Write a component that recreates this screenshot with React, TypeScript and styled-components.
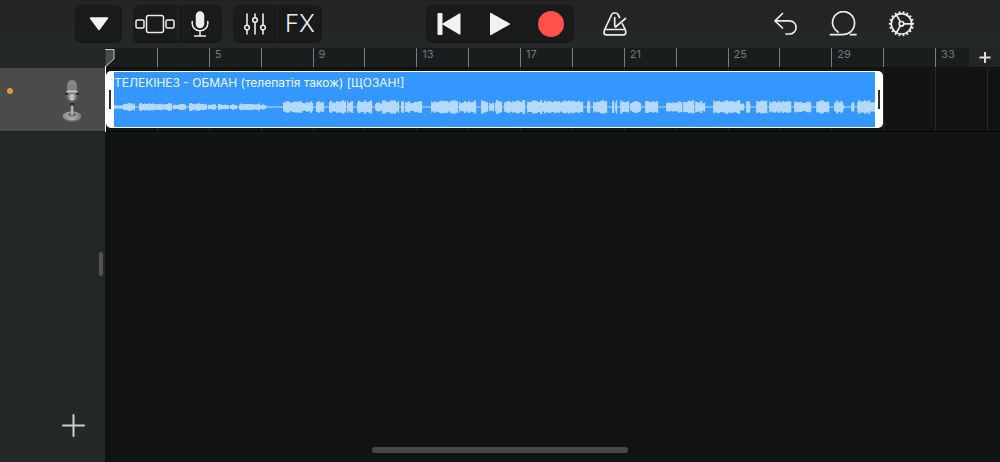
import React from "react";
import styled, { createGlobalStyle } from "styled-components";

const GlobalStyle = createGlobalStyle`
  *, *::before, *::after { box-sizing: border-box; }
  body {
    margin: 0;
    background: #121413;
    color: #ececec;
    font-family: Inter, "Liberation Sans", sans-serif;
  }
  button { font: inherit; color: inherit; border: 0; padding: 0; background: none; cursor: pointer; }
`;

const COLUMNS = "repeat(17, minmax(0, 1fr))";

const Page = styled.div`
  position: relative;
  display: flex;
  flex-direction: column;
  min-height: 100vh;
`;

const Toolbar = styled.header`
  display: grid;
  grid-template-columns: 1fr auto 1fr;
  height: 48px;
  padding: 5px 75px;
  background: linear-gradient(#232423, #252829);
`;

const ToolCluster = styled.div`
  display: flex;
  gap: 11px;
`;

const ActionCluster = styled.div`
  display: flex;
  gap: 10px;
  padding-left: 16px;
`;

const ButtonGroup = styled.div`
  display: flex;
  overflow: hidden;
  border-radius: 6px;
  background: #191a1a;
`;

const ToolButton = styled.button<{ $width?: number }>`
  display: flex;
  align-items: center;
  justify-content: center;
  width: ${(p) => p.$width ?? 44}px;
  height: 38px;

  ${ButtonGroup} > & + & {
    box-sizing: content-box;
    border-left: 1px solid #242626;
  }
`;

const FxLabel = styled.span`
  font-size: 24px;
  font-weight: 300;
  line-height: 38px;
`;

const PlainButton = styled.button<{ $push?: boolean }>`
  display: flex;
  align-items: center;
  justify-content: center;
  width: 48px;
  height: 38px;
  ${(p) => p.$push && "margin-left: auto;"}
`;

const Workspace = styled.main`
  display: flex;
  flex: 1;
`;

const Sidebar = styled.aside`
  display: flex;
  flex-direction: column;
  width: 105px;
  background: #252829;
`;

const TrackHeader = styled.div`
  display: flex;
  align-items: center;
  justify-content: space-between;
  height: 64px;
  margin-top: 20px;
  padding: 0 22px 0 7px;
  border-bottom: 1px solid #1f2122;
  background: #4b4b4c;
`;

const StatusDot = styled.span`
  width: 6px;
  height: 6px;
  margin-bottom: 18px;
  border-radius: 50%;
  background: #dc9c3f;
`;

const ResizeGrip = styled.div`
  align-self: flex-end;
  width: 4px;
  height: 24px;
  margin: 120px 2px auto 0;
  border-radius: 2px;
  background: #525455;
`;

const AddTrack = styled.button`
  display: flex;
  align-self: flex-end;
  margin: 0 20px 25px 0;
`;

const Timeline = styled.section`
  position: relative;
  flex: 1;
  min-width: 0;
`;

const Ruler = styled.div`
  display: grid;
  grid-template-columns: ${COLUMNS};
  height: 20px;
  padding-right: 13px;
  border-bottom: 1px solid #111212;
  background: #1a1d1e;
`;

const RulerMark = styled.span<{ $first: boolean }>`
  padding-left: 5px;
  border-left: 1px solid ${(p) => (p.$first ? "transparent" : "#7b7e7e")};
  color: #77797a;
  font-size: 11px;
  line-height: 13px;
`;

const AddSection = styled.button`
  position: absolute;
  top: 0;
  right: 0;
  display: flex;
  align-items: center;
  justify-content: center;
  width: 31px;
  height: 19px;
  background: #232525;
`;

const Lane = styled.div`
  display: grid;
  grid-template-columns: ${COLUMNS};
  height: 64px;
  padding-right: 13px;
  border-bottom: 1px solid #050505;
`;

const LaneCell = styled.span<{ $column: number }>`
  grid-row: 1;
  grid-column: ${(p) => p.$column};
  border-right: 1px solid #292b2a;
  transform: translateX(1px);
`;

const Region = styled.div`
  z-index: 1;
  display: flex;
  grid-row: 1;
  grid-column: 1 / span 15;
  height: 57px;
  margin: 3px 0 0 1px;
  border-radius: 5px;
  background: #fff;
`;

const RegionHandle = styled.button`
  display: flex;
  align-items: center;
  justify-content: center;
  width: 8px;
  cursor: ew-resize;

  &::before {
    content: "";
    width: 2px;
    height: 19px;
    background: #2c2e30;
  }
`;

const RegionBody = styled.div`
  display: flex;
  flex: 1;
  flex-direction: column;
  min-width: 0;
  margin: 1px 0;
  background: #3397ff;
`;

const RegionName = styled.span`
  overflow: hidden;
  height: 24px;
  color: #f1f8ff;
  font-size: 12px;
  line-height: 22px;
  white-space: nowrap;
`;

const Wave = styled.svg`
  display: block;
  width: 100%;
  height: 22px;
`;

const Playhead = styled.svg`
  position: absolute;
  z-index: 2;
  top: 0;
  left: 0;
`;

const HomeBar = styled.div`
  position: absolute;
  bottom: 9px;
  left: 50%;
  width: 256px;
  height: 6px;
  border-radius: 3px;
  background: #474948;
  transform: translateX(-50%);
`;

// Start, end and peak of each burst of sound, measured along a 761-unit clip.
const bursts: number[][] = [
  [0, 8, 2], [9, 20, 4], [25, 44, 4], [45, 57, 4], [59, 71, 3], [75, 92, 4], [94, 101, 3],
  [104, 114, 3], [116, 122, 3], [125, 145, 4], [145, 151, 3], [169, 198, 6], [202, 209, 6],
  [215, 231, 7], [233, 238, 6], [243, 257, 7], [261, 267, 5], [268, 284, 7], [287, 289, 6],
  [291, 307, 6], [317, 343, 7], [345, 359, 6], [360, 361, 7], [367, 373, 7], [375, 379, 5],
  [381, 387, 7], [390, 410, 7], [413, 426, 7], [427, 446, 7], [447, 468, 7], [473, 475, 7],
  [479, 492, 7], [498, 499, 7], [501, 502, 7], [506, 514, 7], [516, 526, 6], [531, 543, 7],
  [552, 567, 6], [569, 579, 7], [581, 590, 6], [599, 625, 7], [626, 629, 5], [632, 635, 6],
  [642, 652, 7], [655, 676, 6], [680, 696, 6], [702, 714, 7], [720, 728, 7], [729, 729, 3],
  [737, 739, 5], [743, 761, 7],
];

const noise = (n: number) => {
  const v = Math.sin(n * 12.9898) * 43758.5453;
  return v - Math.floor(v);
};

const wavePath = bursts
  .map(([start, end, peak]) => {
    let d = "";
    for (let x = start; x <= end; x += 1) {
      const h = peak * (0.62 + 0.38 * noise(Math.floor(x / 2) + 3));
      d += `M${x + 0.5} ${(11 - h).toFixed(1)}V${(11 + h).toFixed(1)}`;
    }
    return d;
  })
  .join("");

const gearTeeth = Array.from({ length: 18 }, (_, i) => i * 20);

const labels = Array.from({ length: 17 }, (_, i) => (i > 0 && i % 2 === 0 ? i * 2 + 1 : null));

const stroke = {
  fill: "none",
  stroke: "#ececec",
  strokeWidth: 1.7,
  strokeLinecap: "round" as const,
  strokeLinejoin: "round" as const,
};

const MenuIcon = () => (
  <svg width="20" height="14" viewBox="0 0 20 14">
    <path d="M1.500 1H18.500L10 12.500Z" fill="#f2f2f2" stroke="#f2f2f2" strokeWidth="1.500" strokeLinejoin="round" />
  </svg>
);

const BrowserIcon = () => (
  <svg width="40" height="20" viewBox="0 0 40 20" {...stroke} strokeWidth="1.500">
    <rect x="11.500" y="1.500" width="17" height="17" rx="2" />
    <rect x="1" y="6" width="8" height="8" rx="1.500" />
    <rect x="31" y="6" width="8" height="8" rx="1.500" />
  </svg>
);

const VoiceIcon = () => (
  <svg width="18" height="26" viewBox="0 0 18 26" {...stroke} strokeWidth="1.500">
    <rect x="5.500" y="1" width="7" height="15.500" rx="3.500" fill="#ececec" />
    <path d="M1.200 10.500V12.500A7.800 7.200 0 0 0 16.800 12.500V10.500M9 20V24.500M3.500 25H14.500" />
  </svg>
);

const MixerIcon = () => (
  <svg width="22" height="22" viewBox="0 0 22 22" {...stroke} strokeWidth="1.600">
    <path d="M3 1V12M3 17V21M11 1V4.500M11 9.500V21M19 1V12M19 17V21" />
    <circle cx="3" cy="14.500" r="2.300" />
    <circle cx="11" cy="7" r="2.300" />
    <circle cx="19" cy="14.500" r="2.300" />
  </svg>
);

const RewindIcon = () => (
  <svg width="24" height="22" viewBox="0 0 24 22" fill="#f2f2f2">
    <rect x="0.500" y="0" width="5" height="22" rx="1" />
    <path d="M22.300 0.400Q23.500 0 23.500 1.200V20.800Q23.500 22 22.300 21.500L5.500 11.600V10.400Z" />
  </svg>
);

const PlayIcon = () => (
  <svg width="22" height="24" viewBox="0 0 22 24">
    <path d="M1.500 1.200V22.800L20.800 12Z" fill="#f2f2f2" stroke="#f2f2f2" strokeWidth="1" strokeLinejoin="round" />
  </svg>
);

const RecordIcon = () => (
  <svg width="26" height="26" viewBox="0 0 26 26">
    <circle cx="13" cy="13" r="13" fill="#ff5149" />
  </svg>
);

const MetronomeIcon = () => (
  <svg width="26" height="26" viewBox="0 0 26 26" {...stroke}>
    <path d="M18.600 6.500L17 3.500Q16.200 2 14.800 2H12.800Q11.400 2 10.700 3.500L3.700 18.500Q3 20 3 21.500Q3 23.800 5.200 23.800H22.500Q24.800 23.800 24.800 21.500Q24.800 20 24.200 18.500L21.400 12.800" />
    <path d="M4 18.500H23.800M14.500 16L24.500 7.500M13.700 6.500V15" />
  </svg>
);

const UndoIcon = () => (
  <svg width="26" height="26" viewBox="0 0 26 26" {...stroke}>
    <path d="M10.500 2.500L3 9.800L10.500 17M3.500 9.800H17.500A6.600 6.600 0 0 1 17.500 23H14" />
  </svg>
);

const LoopIcon = () => (
  <svg width="28" height="26" viewBox="0 0 28 26" {...stroke}>
    <path d="M1.500 23.700H13C20 23.700 25.500 19.200 25.500 12.600A11 11 0 1 0 9.200 21.200M21.500 23.700H27" />
  </svg>
);

const GearIcon = () => (
  <svg width="28" height="28" viewBox="0 0 28 28" {...stroke}>
    <circle cx="14.500" cy="13.800" r="10.200" />
    <circle cx="14.500" cy="13.800" r="2.300" />
    <path d="M17 13.800H24.500M13.300 11.700L9.500 5.100M13.300 15.900L9.500 22.500" />
    {gearTeeth.map((a) => (
      <path key={a} d="M14.500 3.300V1.200" strokeWidth="1.800" strokeLinecap="butt" transform={`rotate(${a + 10} 14.500 13.800)`} />
    ))}
  </svg>
);

const StudioMic = () => (
  <svg width="22" height="46" viewBox="0 0 22 46" role="img" aria-label="Audio recorder">
    <defs>
      <linearGradient id="chrome" x1="0" x2="1">
        <stop offset="0" stopColor="#747576" />
        <stop offset="0.500" stopColor="#d0d0d0" />
        <stop offset="1" stopColor="#6c6d6e" />
      </linearGradient>
      <linearGradient id="base" x1="0" x2="1">
        <stop offset="0" stopColor="#8e8f8f" />
        <stop offset="0.500" stopColor="#a9aaaa" />
        <stop offset="1" stopColor="#7c7d7d" />
      </linearGradient>
      <linearGradient id="grille" x1="0" x2="0" y1="0" y2="1">
        <stop offset="0" stopColor="#828383" />
        <stop offset="1" stopColor="#6a6b6b" />
      </linearGradient>
    </defs>
    <ellipse cx="11" cy="40.500" rx="9.300" ry="5" fill="#5d5e5f" />
    <ellipse cx="11" cy="39" rx="9.300" ry="4.500" fill="url(#base)" />
    <ellipse cx="11" cy="37.500" rx="4" ry="1.800" fill="#68696a" />
    <path d="M5 17V19Q5.500 25.500 11 26Q16.500 25.500 17 19V17" fill="none" stroke="#5a5b5c" strokeWidth="1.400" />
    <rect x="9.500" y="26" width="3.200" height="12" fill="url(#chrome)" />
    <rect x="9" y="26" width="4.200" height="2.500" fill="#2c2d2e" />
    <rect x="6" y="3" width="10" height="20.500" rx="5" fill="url(#grille)" />
    <path d="M8.500 5V14M11 4V14M13.500 5V14" stroke="#979898" strokeWidth="0.800" />
    <path d="M6.500 17H15.500V20Q15 23.500 11 23.800Q7 23.500 6.500 20Z" fill="url(#chrome)" />
    <rect x="5.500" y="13.500" width="11" height="2" rx="0.500" fill="#c4c4c4" />
    <path d="M4 17H7.500M14.500 17H18" stroke="#1f2021" strokeWidth="1.500" />
    <path d="M7.500 17H14.500" stroke="#8a8b8b" strokeWidth="1" />
  </svg>
);

export default function App() {
  return (
    <Page>
      <GlobalStyle />
      <Toolbar>
        <ToolCluster>
          <ButtonGroup>
            <ToolButton $width={47} aria-label="Menu"><MenuIcon /></ToolButton>
          </ButtonGroup>
          <ButtonGroup>
            <ToolButton aria-label="Browser"><BrowserIcon /></ToolButton>
            <ToolButton aria-label="Instrument"><VoiceIcon /></ToolButton>
          </ButtonGroup>
          <ButtonGroup>
            <ToolButton aria-label="Track controls"><MixerIcon /></ToolButton>
            <ToolButton><FxLabel>FX</FxLabel></ToolButton>
          </ButtonGroup>
        </ToolCluster>
        <ButtonGroup>
          <ToolButton $width={46} aria-label="Go to beginning"><RewindIcon /></ToolButton>
          <ToolButton $width={56} aria-label="Play"><PlayIcon /></ToolButton>
          <ToolButton $width={46} aria-label="Record"><RecordIcon /></ToolButton>
        </ButtonGroup>
        <ActionCluster>
          <PlainButton aria-label="Metronome"><MetronomeIcon /></PlainButton>
          <PlainButton $push aria-label="Undo"><UndoIcon /></PlainButton>
          <PlainButton aria-label="Loop browser"><LoopIcon /></PlainButton>
          <PlainButton aria-label="Settings"><GearIcon /></PlainButton>
        </ActionCluster>
      </Toolbar>
      <Workspace>
        <Sidebar>
          <TrackHeader>
            <StatusDot />
            <StudioMic />
          </TrackHeader>
          <ResizeGrip />
          <AddTrack aria-label="Add track">
            <svg width="23" height="23" viewBox="0 0 23 23" {...stroke} stroke="#cfcfcf" strokeWidth="2">
              <path d="M1 11.500H22M11.500 1V22" />
            </svg>
          </AddTrack>
        </Sidebar>
        <Timeline>
          <Ruler>
            {labels.map((label, i) => (
              <RulerMark key={i} $first={i === 0}>{label}</RulerMark>
            ))}
          </Ruler>
          <AddSection aria-label="Add section">
            <svg width="12" height="12" viewBox="0 0 12 12">
              <path d="M0.500 5.500H11.500M6 0V11" stroke="#dcdcdc" strokeWidth="2" />
            </svg>
          </AddSection>
          <Lane>
            {labels.map((_, i) => (
              <LaneCell key={i} $column={i + 1} />
            ))}
            <Region>
              <RegionHandle aria-label="Trim start" />
              <RegionBody>
                <RegionName>ТЕЛЕКІНЕЗ - ОБМАН (телепатія також) [ЩОЗАН!]</RegionName>
                <Wave viewBox="0 0 761 22" preserveAspectRatio="none" aria-hidden="true">
                  <path d="M0 11H761" stroke="#8fc5ff" strokeWidth="1.500" />
                  <path d={wavePath} stroke="#b5d8ff" strokeWidth="1.100" />
                </Wave>
              </RegionBody>
              <RegionHandle aria-label="Trim end" />
            </Region>
          </Lane>
          <Playhead width="10" height="84" viewBox="0 0 10 84" aria-hidden="true">
            <path d="M0.500 1.500H9V11L0.500 18.500Z" fill="#4a4c4c" />
            <path d="M0 1.500H9V11L0.500 18.500" fill="none" stroke="#c9caca" />
            <path d="M0.500 18V84" stroke="#fff" />
          </Playhead>
        </Timeline>
      </Workspace>
      <HomeBar />
    </Page>
  );
}
